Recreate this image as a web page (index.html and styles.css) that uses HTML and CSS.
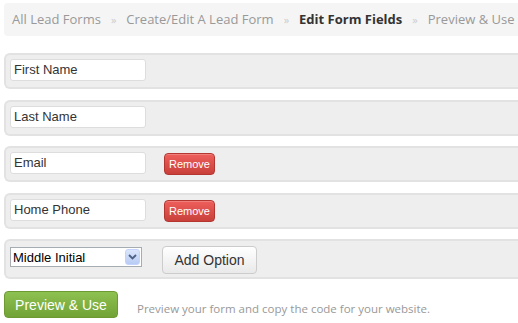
FILE: index.html
```html
<!DOCTYPE html>
<html>
<head>
<meta charset="utf-8">
<link rel="stylesheet" href="styles.css">
</head>
<body>
<div class="crumbs">
  <span class="crumb">All Lead Forms</span><span class="sep">»</span><span class="crumb">Create/Edit A Lead Form</span><span class="sep">»</span><span class="crumb current">Edit Form Fields</span><span class="sep">»</span><span class="crumb">Preview &amp; Use</span>
</div>
<div class="fields">
  <div class="row"><div class="field">First Name</div></div>
  <div class="row"><div class="field">Last Name</div></div>
  <div class="row"><div class="field">Email</div><button class="btn-remove">Remove</button></div>
  <div class="row"><div class="field">Home Phone</div><button class="btn-remove">Remove</button></div>
  <div class="row row-last">
    <div class="select"><span class="select-text">Middle Initial</span><span class="select-arrow"><svg width="9" height="6" viewBox="0 0 9 6"><path d="M1 1 L4.5 4.5 L8 1" fill="none" stroke="#4d6185" stroke-width="1.8"/></svg></span></div>
    <button class="btn-add">Add Option</button>
  </div>
</div>
<div class="footer">
  <button class="btn-preview">Preview &amp; Use</button>
  <span class="hint">Preview your form and copy the code for your website.</span>
</div>
</body>
</html>
```
FILE: styles.css
```css
body {
  margin: 0;
  font-family: "Liberation Sans", Arial, sans-serif;
  background: #fff;
}
.crumbs {
  margin: 3px 0 0 4px;
  height: 33px;
  line-height: 33px;
  background: #f5f5f5;
  border-radius: 4px 0 0 4px;
  padding-left: 8px;
  font-family: "Open Sans", sans-serif;
  font-size: 13px;
  color: #999;
  white-space: nowrap;
  overflow: hidden;
}
.crumb.current {
  color: #333;
  font-weight: bold;
}
.sep {
  color: #ccc;
  margin: 0 10px;
  font-size: 11px;
}
.fields {
  margin: 17px 0 0 4px;
  display: flex;
  flex-direction: column;
  gap: 10.5px;
}
.row {
  height: 28px;
  border: 2px solid #e2e2e2;
  border-right: none;
  border-radius: 6px 0 0 6px;
  background: #eee;
  display: flex;
  align-items: flex-start;
  padding: 4px 0 0 4px;
}
.row-last {
  height: 31px;
  padding-top: 5px;
}
.field {
  width: 131px;
  height: 20px;
  line-height: 20px;
  background: #fff;
  border: 1px solid #ddd;
  border-radius: 3px;
  padding-left: 3px;
  font-size: 13px;
  color: #333;
}
.btn-remove {
  margin-left: 18px;
  margin-top: 1px;
  width: 51px;
  height: 22px;
  padding: 0;
  border: 1px solid #b33630;
  border-radius: 4px;
  background: linear-gradient(#ee5f5b, #c9403a);
  color: #fff;
  font-family: "Liberation Sans", Arial, sans-serif;
  font-size: 11px;
  box-shadow: inset 0 1px 0 rgba(255,255,255,0.2);
}
.select {
  margin-top: 1px;
  width: 127px;
  height: 18px;
  border: 1px solid #a5acb2;
  background: #fff;
  display: flex;
  align-items: center;
  justify-content: space-between;
  padding: 0 1px 0 2px;
  font-size: 13px;
  color: #000;
}
.select-arrow {
  width: 15px;
  height: 16px;
  background: linear-gradient(#dbe6fb, #b7cbf4);
  border: 1px solid #c3d3fd;
  border-radius: 3px;
  box-sizing: border-box;
  display: flex;
  align-items: center;
  justify-content: center;
}
.btn-add {
  margin-left: 20px;
  width: 95px;
  height: 28px;
  padding: 0;
  border: 1px solid #ccc;
  border-radius: 4px;
  background: linear-gradient(#fff, #e9e9e9);
  color: #333;
  font-family: "Liberation Sans", Arial, sans-serif;
  font-size: 14px;
}
.footer {
  margin: 12px 0 0 4px;
  display: flex;
  align-items: center;
}
.btn-preview {
  width: 114px;
  height: 27px;
  padding: 0;
  border: 1px solid #6d9a33;
  border-radius: 4px;
  background: linear-gradient(#8dc150, #71a236);
  color: #fff;
  font-family: "Liberation Sans", Arial, sans-serif;
  font-size: 14px;
}
.hint {
  margin-left: 19px;
  margin-top: 8px;
  font-family: "Open Sans", sans-serif;
  font-size: 11.5px;
  color: #999;
}
```
